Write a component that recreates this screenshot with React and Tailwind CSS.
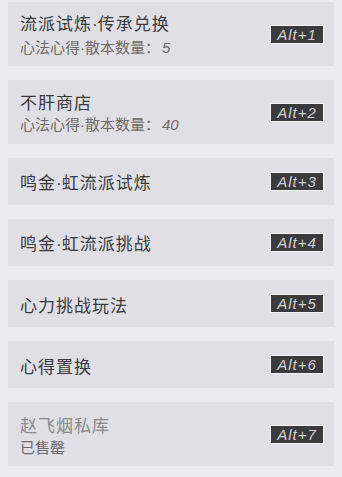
const items = [
  { title: "流派试炼·传承兑换", sub: "心法心得·散本数量：", num: "5", key: "Alt+1" },
  { title: "不肝商店", sub: "心法心得·散本数量：", num: "40", key: "Alt+2" },
  { title: "鸣金·虹流派试炼", key: "Alt+3" },
  { title: "鸣金·虹流派挑战", key: "Alt+4" },
  { title: "心力挑战玩法", key: "Alt+5" },
  { title: "心得置换", key: "Alt+6" },
  { title: "赵飞烟私库", sub: "已售罄", key: "Alt+7", soldOut: true },
];

// the middle dot is drawn narrow, as in a latin font
const withDot = (text) =>
  text.split("·").map((part, i) => (
    <span key={i}>
      {i > 0 && <span className="font-['Liberation_Sans',sans-serif] tracking-normal">·</span>}
      {part}
    </span>
  ));

const Badge = ({ label }) => (
  <div className="p-px bg-[#f4f4f6] shrink-0">
    <div className="w-[52px] h-[17px] bg-[#3b3b3d] flex items-center justify-center text-[15px] tracking-[1px] leading-none italic text-[#cfcfd2] font-['Liberation_Sans',sans-serif]">
      {label}
    </div>
  </div>
);

export default function App() {
  return (
    <div className="w-[342px] h-[477px] bg-[#ebebf0] pt-[2px] px-[8px] flex flex-col gap-[14px] overflow-hidden font-['Noto_Sans_CJK_SC',sans-serif]">
      {items.map((item, i) => (
        <div
          key={i}
          className={`${item.sub ? "h-[64px]" : "h-[47px]"} bg-[#dfdfe5] flex items-center justify-between pl-[12px] pr-[10px]`}
        >
          <div className="flex flex-col pt-[2px]">
            <div
              className={`text-[17px] leading-[22px] tracking-[1px] ${item.soldOut ? "text-[#8a8a8c]" : "text-[#3a3a3c]"}`}
            >
              {withDot(item.title)}
            </div>
            {item.sub && (
              <div className={`text-[15px] leading-[20px] mt-[1px] ${item.soldOut ? "text-[#6a6a6c]" : "text-[#6f6a66]"}`}>
                {withDot(item.sub)}
                {item.num && (
                  <span className="italic font-['Liberation_Sans',sans-serif] ml-[2px]">{item.num}</span>
                )}
              </div>
            )}
          </div>
          <Badge label={item.key} />
        </div>
      ))}
    </div>
  );
}
